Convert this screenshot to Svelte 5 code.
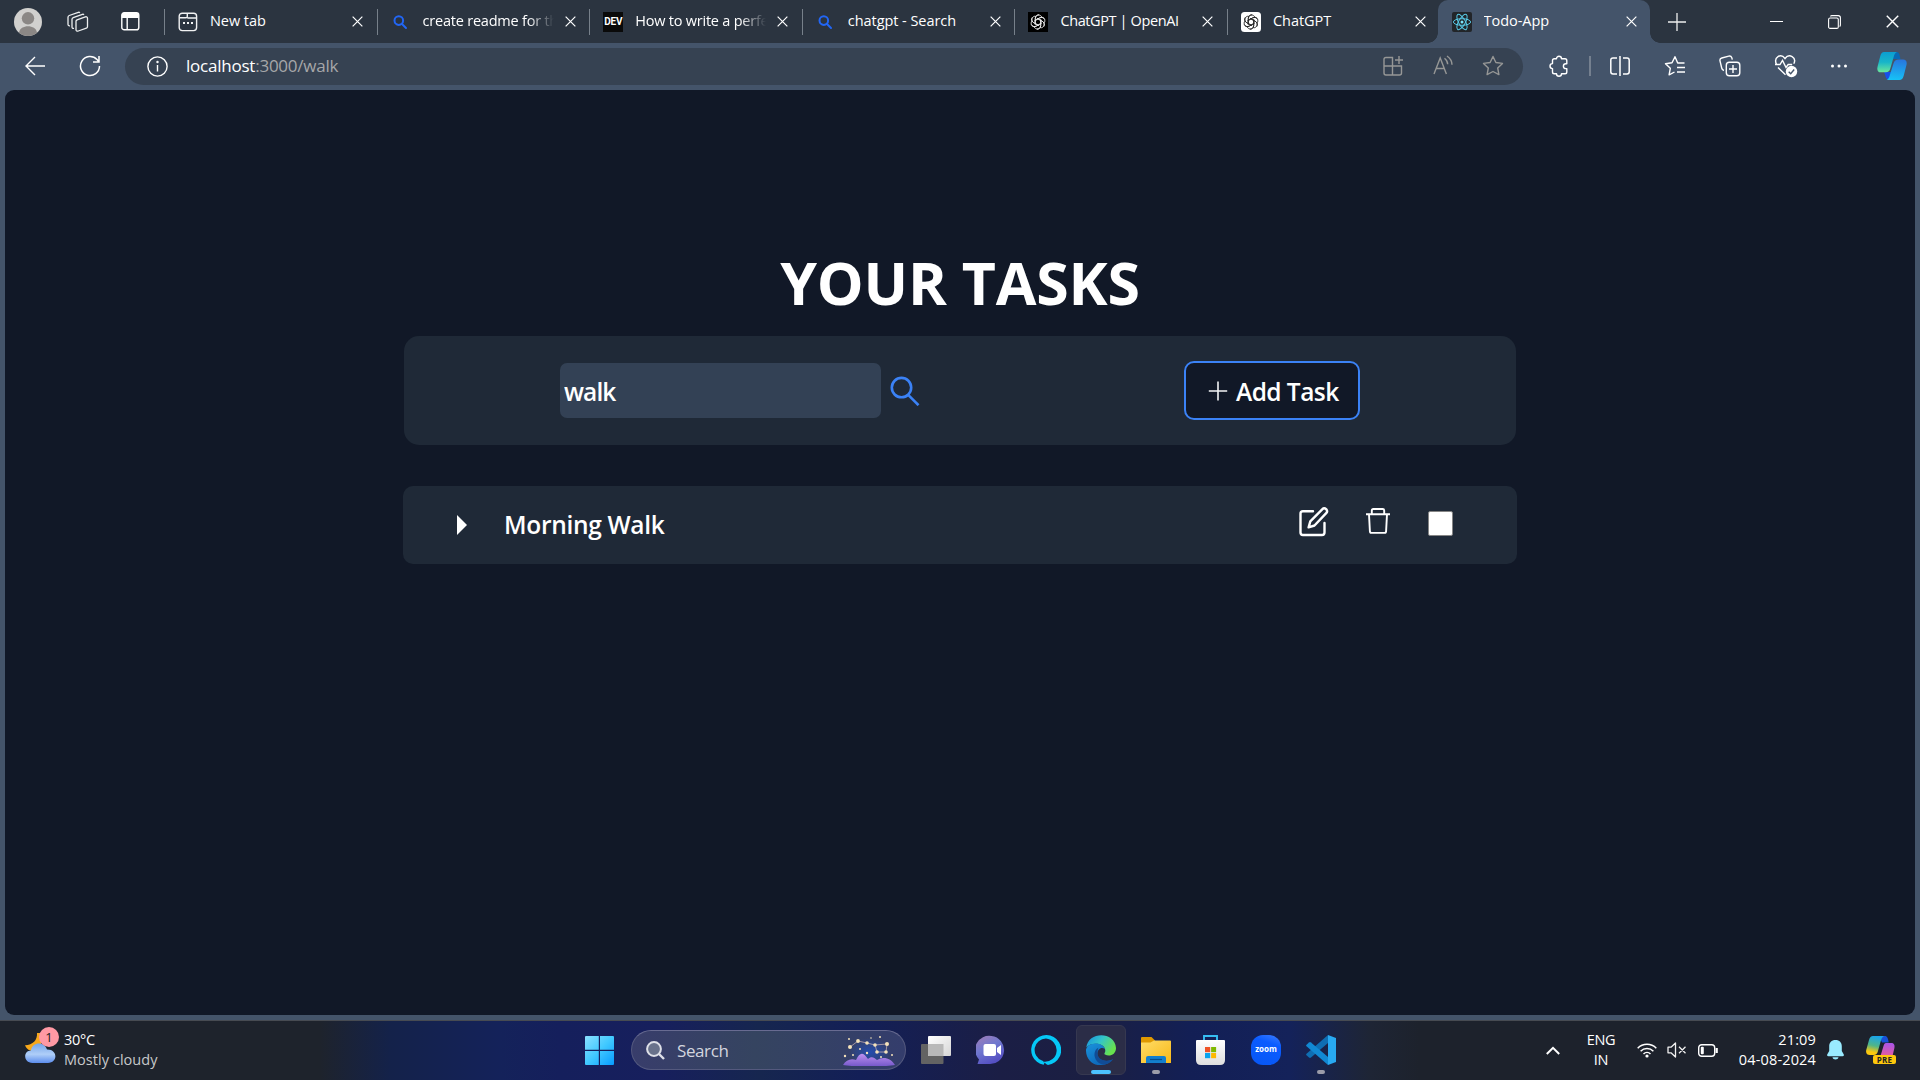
<script>
  const tabs = [
    { title: 'New tab', icon: 'page' },
    { title: 'create readme for this', icon: 'search', long: true },
    { title: 'How to write a perfect', icon: 'dev', long: true },
    { title: 'chatgpt - Search', icon: 'search' },
    { title: 'ChatGPT | OpenAI', icon: 'gptdark', tight: true },
    { title: 'ChatGPT', icon: 'gptlight' },
    { title: 'Todo-App', icon: 'react', active: true },
  ];
  const petals = [0, 60, 120, 180, 240, 300];
  let query = $state('walk');
  let done = $state(false);
</script>

{#snippet cross(size)}
  <svg width={size} height={size} viewBox="0 0 12 12" fill="none" stroke="currentColor" stroke-width="1.3"><path d="M.7.7l10.6 10.6M11.3.7L.7 11.3" /></svg>
{/snippet}

{#snippet favicon(kind)}
  {#if kind === 'page'}
    <svg width="20" height="20" viewBox="0 0 20 20" fill="none" stroke="#f1f2f3" stroke-width="1.4"><rect x="1.2" y="1.2" width="17.4" height="17.4" rx="3" /><path d="M1.5 5.8h6.2c1 0 1.6-.5 1.6-1.4V1.5M9 4.8c0 .8.5 1.2 1.3 1.2h8" /><path d="M5 11h2M9 11h2M13 11h2" stroke-width="2" /></svg>
  {:else if kind === 'search'}
    <svg width="20" height="20" viewBox="0 0 20 20" fill="none" stroke="#2266f5" stroke-width="2"><circle cx="7.800" cy="8.600" r="4.300" /><path d="M11 12l4 4" stroke-linecap="round" /></svg>
  {:else if kind === 'dev'}
    <span class="dev">DEV</span>
  {:else if kind === 'react'}
    <svg width="20" height="20" viewBox="0 0 20 20" fill="none" stroke="#58c9e6" stroke-width="1"><rect width="20" height="20" rx="2" fill="#222529" stroke="none" /><ellipse cx="10" cy="10" rx="8.6" ry="3.3" /><ellipse cx="10" cy="10" rx="8.6" ry="3.3" transform="rotate(60 10 10)" /><ellipse cx="10" cy="10" rx="8.6" ry="3.3" transform="rotate(120 10 10)" /><circle cx="10" cy="10" r="1.5" fill="#7ce4fa" stroke="none" /></svg>
  {:else}
    <svg width="20" height="20" viewBox="0 0 20 20" fill="none" stroke={kind === 'gptdark' ? '#eee' : '#222'} stroke-width=".85">
      <rect width="20" height="20" rx={kind === 'gptdark' ? 0 : 3.5} fill={kind === 'gptdark' ? '#000' : '#fff'} stroke="none" />
      {#each petals as angle}
        <path d="M7.3 13V6.5c0-4 5.4-4.6 6.5-1.3M7.3 8.4L11.9 5.8c2.2-1.2 4.1-.1 5 1.6" transform="rotate({angle} 10 10)" />
      {/each}
    </svg>
  {/if}
{/snippet}

<div class="desktop">
  <header class="tabbar">
    <svg class="avatar" width="28" height="28" viewBox="0 0 28 28"><circle cx="14" cy="14" r="14" fill="#d1d0ce" /><circle cx="14" cy="10.3" r="6.2" fill="#8b8785" /><path d="M5 24.7c1-8.5 17-8.5 18 0A14 14 0 0 1 5 24.7z" fill="#8b8785" /></svg>
    <svg class="workspaces" width="22" height="22" viewBox="0 0 22 22" fill="none" stroke="#eceeef" stroke-width="1.3" stroke-linejoin="round"><path d="M9 10.3c0-.8.4-1.2 1.1-1.5l8.2-2.9c1.3-.4 2.2.2 2.2 1.4v8.2c0 .8-.4 1.4-1.1 1.6l-8.1 2.9C10 20.400 9 19.900 9 18.700z" /><path d="M7 17.400c-1.300.2-2-.3-2-1.500V8.300c0-.8.400-1.400 1.200-1.700l9.200-3.300c.7-.2 1.200 0 1.500.6M3 14.800c-1.300.2-2-.4-2-1.500V6.200c0-.9.400-1.400 1.200-1.700l9.100-3.200c.7-.2 1.200 0 1.500.6" /></svg>
    <svg class="vertical" width="19" height="19" viewBox="0 0 19 19"><rect x=".8" y=".8" width="17" height="17" rx="2.400" fill="none" stroke="#fff" stroke-width="1.400" /><path d="M.8 6V3Q.8.8 3 .8h12.600q2.200 0 2.200 2.200v3z" fill="#fff" /><path d="M6.200 6v12" stroke="#fff" stroke-width="1.400" /></svg>

    <nav class="tabs">
      {#each tabs as tab}
        <div class="tab" class:active={tab.active}>
          {@render favicon(tab.icon)}
          <span class="title" class:long={tab.long} class:tight={tab.tight}>{tab.title}</span>
          {@render cross(11)}
        </div>
      {/each}
    </nav>

    <svg class="plus" width="18" height="18" viewBox="0 0 18 18" stroke="#eee" stroke-width="1.300"><path d="M9 0v18M0 9h18" /></svg>
    <div class="window-buttons">
      <svg width="13" height="13" viewBox="0 0 13 13" stroke="#fff"><path d="M0 6.500h13" /></svg>
      <svg width="13" height="14" viewBox="0 0 13 14" fill="none" stroke="#fff" stroke-width="1.100"><rect x=".6" y="3" width="9.700" height="10.400" rx="1.500" /><path d="M2.500 1.500Q2.700.6 4 .6h6.200q2.200 0 2.200 2.200v7.200q0 1-.8 1.500" /></svg>
      {@render cross(13)}
    </div>
  </header>

  <div class="toolbar">
    <svg class="back" width="20" height="20" viewBox="0 0 20 20" fill="none" stroke="#fff" stroke-width="1.400"><path d="M20 10H1M10 1L1 10l9 9" /></svg>
    <svg class="reload" width="22" height="22" viewBox="0 0 22 22" fill="none" stroke="#fff" stroke-width="1.500"><path d="M20.500 11a9.500 9.500 0 1 1-2.500-6.400l1.500 1.700M20 1v6h-6" /></svg>
    <div class="address">
      <svg class="info" width="21" height="21" viewBox="0 0 21 21" fill="none" stroke="#fff" stroke-width="1.400"><circle cx="10.500" cy="10.500" r="9.600" /><path d="M10.500 9v6.500" /><circle cx="10.500" cy="6" r=".5" fill="#fff" /></svg>
      <span class="url">localhost<em>:3000/walk</em></span>
      <div class="address-icons">
        <svg width="22" height="22" viewBox="0 0 22 22" fill="none" stroke="currentColor" stroke-width="1.400"><path d="M10.500 20V2.500H4Q2 2.500 2 4.500V18q0 2 2 2h13.500q2 0 2-2v-7H2M17 1v8M13 5h8" /></svg>
        <svg width="22" height="22" viewBox="0 0 22 22" fill="none" stroke="currentColor" stroke-width="1.400"><path d="M2 19L8.200 3l6.200 16M4.200 13.500h8M12.500 3.200c2.200 1.800 3.200 3.500 3.200 6M15 1c3.200 2.200 5 5 5 8.700" /></svg>
        <svg width="22" height="22" viewBox="0 0 22 22" fill="none" stroke="currentColor" stroke-width="1.400" stroke-linejoin="round"><path d="M11 1.500l2.900 6 6.600.9-4.800 4.600 1.200 6.600L11 16.500l-5.900 3.100 1.200-6.600L1.500 8.400l6.600-.9z" /></svg>
      </div>
    </div>
    <svg class="puzzle" width="22" height="22" viewBox="0 0 22 22" fill="none" stroke="#fff" stroke-width="1.400" stroke-linejoin="round"><path d="M8.500 3.700a2.500 2.500 0 0 1 5 0H17q1.800 0 1.800 1.800v3.300h-1a2.400 2.400 0 0 0 0 4.800h1V17q0 1.800-1.800 1.800h-3.500a2.500 2.500 0 0 1-5 0H6.300q-1.800 0-1.800-1.800v-3.400a2.500 2.500 0 0 1 0-5V5.500q0-1.800 1.800-1.800z" /></svg>
    <i class="rule"></i>
    <div class="tools">
      <svg width="22" height="22" viewBox="0 0 22 22" fill="none" stroke="#fff" stroke-width="1.500"><path d="M8 3H4Q1.800 3 1.800 5.200v11.600Q1.800 19 4 19h4M11 1v20M14 3h4q2.200 0 2.200 2.200v11.600q0 2.200-2.200 2.200h-4" /></svg>
      <svg width="22" height="22" viewBox="0 0 22 22" fill="none" stroke="#fff" stroke-width="1.400" stroke-linejoin="round"><path d="M20.500 8h-6.800L11 1.700l-3 6-6.500 1 4.800 4.600-1.200 6.600 5.400-2.900M13 12.500h8M13 17h8" /></svg>
      <svg width="22" height="22" viewBox="0 0 22 22" fill="none" stroke="#fff" stroke-width="1.400"><rect x="7.300" y="7.300" width="13.500" height="13.500" rx="3" /><path d="M14 10v8M10 14h8M5 15.500C3.500 15.200 3 14.500 2.700 13L1 5.800c-.3-1.500.3-2.400 1.800-2.800l7-1.900c1.500-.3 2.500.3 3 1.600l.5 2" /></svg>
      <svg width="24" height="24" viewBox="0 0 24 24" fill="none" stroke="#fff" stroke-width="1.400"><path d="M2.500 10.500C-.8 3 7-1 11 4.500c4-5.500 12-1.500 8.800 5.300M1 10.500h5l2.500-4 3.500 7 2.200-3h4M4 13.500l7.500 7.200" /><circle cx="17.500" cy="17.500" r="5.700" fill="#fff" stroke="none" /><path d="M14.700 17.800l2 1.900 3.500-4.200" stroke="#44546a" /></svg>
      <svg class="more" width="22" height="22" viewBox="0 0 22 22" fill="#fff"><circle cx="4.500" cy="11" r="1.500" /><circle cx="11" cy="11" r="1.500" /><circle cx="17.500" cy="11" r="1.500" /></svg>
    </div>
    <svg class="copilot" width="30" height="28" viewBox="0 0 30 28">
      <defs>
        <linearGradient id="cpa" x1="0" y1="0" x2="0" y2="1"><stop stop-color="#0b9ed2" /><stop offset=".5" stop-color="#18b5c9" /><stop offset="1" stop-color="#6ce79a" /></linearGradient>
        <linearGradient id="cpb" x1=".5" y1="0" x2=".4" y2="1"><stop stop-color="#2877df" /><stop offset="1" stop-color="#16c2f6" /></linearGradient>
      </defs>
      <path d="M16 0h3.500c2 0 2.700 1.500 3.300 4l.7 3H16z" fill="#0869b5" /><path d="M7 20h7l-1 7.500c-3 0-4-.8-4.700-4z" fill="#1750e8" />
      <path d="M7 0h13c-2 .7-2.800 2.600-3.500 5.500l-3.200 11c-.7 2.600-2 3.800-4.500 3.800H4C.8 20.300-.3 18 .6 14.500L3.300 4C4 1.300 5.200 0 7 0z" fill="url(#cpa)" />
      <path d="M21.500 7.500H26c3.200 0 4.300 2.300 3.400 5.800l-2.700 10.400c-.7 2.700-2 4.300-4.500 4.300H9.500c2-.8 2.800-2.600 3.500-5.500l3.500-11c.8-2.700 2.400-4 5-4z" fill="url(#cpb)" />
    </svg>
  </div>

  <main class="page">
    <h1>YOUR TASKS</h1>
    <section class="controls">
      <div class="search">
        <input bind:value={query} aria-label="Search tasks" />
        <svg width="30" height="30" viewBox="0 0 30 30" fill="none" stroke="#3b82f6" stroke-width="2.600"><circle cx="11.500" cy="11.600" r="9.700" /><path d="M18.200 18.800l10.300 10.400" /></svg>
      </div>
      <button class="add"><svg width="20" height="20" viewBox="0 0 20 20" stroke="#f3f4f6" stroke-width="1.600"><path d="M10 .5v19M.8 10h18.400" /></svg><span>Add Task</span></button>
    </section>
    <section class="task">
      <svg class="caret" width="10" height="20" viewBox="0 0 10 20" fill="#fff"><path d="M0 0l10 10L0 20z" /></svg>
      <span class="name">Morning Walk</span>
      <svg class="edit" width="30" height="30" viewBox="0 0 30 30" fill="none" stroke="#fff" stroke-width="2.400" stroke-linecap="round" stroke-linejoin="round"><path d="M14 4.200H4q-2.500 0-2.500 2.500v18.800Q1.500 28 4 28h19q2.500 0 2.500-2.500V16" /><path d="M23.200 2.300c2.600-2.600 6.500 1.100 4 3.900L15.500 18.500 9.600 20.300l1.700-6z" /></svg>
      <svg class="trash" width="24" height="26" viewBox="0 0 24 26" fill="none" stroke="#fff" stroke-width="1.900" stroke-linejoin="round"><path d="M0 6.300h24M3 6.300l.9 17q0 1.600 1.600 1.600h13q1.600 0 1.600-1.600l.9-17M5.800 6V2.500Q5.800 1 7.300 1h9.400q1.500 0 1.500 1.500V6" /></svg>
      <input class="check" type="checkbox" bind:checked={done} aria-label="Done" />
    </section>
  </main>

  <footer class="taskbar">
    <div class="weather">
      <div class="sky">
        <svg width="31" height="32" viewBox="0 0 31 32">
          <defs><linearGradient id="cloud" x1="0" y1="0" x2="0" y2="1"><stop stop-color="#75a5e9" /><stop offset=".55" stop-color="#afcef8" /><stop offset="1" stop-color="#5c8ded" /></linearGradient></defs>
          <path d="M12 0c.5 7-4 12-12 12.300 2 6 10 8 16 3.700V0z" fill="#f7a81b" />
          <path d="M7.500 30C-2 30-2 17.500 6 17.500 7 9 19 8 22 16.500c11-.5 11 13.500 1 13.500z" fill="url(#cloud)" />
        </svg>
        <span class="badge">1</span>
      </div>
      <div class="forecast"><span>30°C</span><span class="dim">Mostly cloudy</span></div>
    </div>

    <svg class="start" width="29" height="29" viewBox="0 0 29 29">
      <defs><linearGradient id="win" x1="0" y1="0" x2="1" y2="1"><stop stop-color="#8be0ff" /><stop offset=".5" stop-color="#41c9ff" /><stop offset="1" stop-color="#079bff" /></linearGradient></defs>
      <path d="M1 0h12.800v13.800H0V1q0-1 1-1zM15 0h13q1 0 1 1v12.800H15zM0 15h13.800v14H1q-1 0-1-1zM15 15h14v13q0 1-1 1H15z" fill="url(#win)" />
    </svg>
    <div class="taskbar-search">
      <svg width="19" height="19" viewBox="0 0 19 19" fill="none" stroke="#dee0e8" stroke-width="2"><circle cx="8" cy="8" r="6.900" fill="#69728b" /><path d="M13 13l5 5" stroke-width="2.400" /></svg>
      <span>Search</span>
      <svg class="stars" width="52" height="32" viewBox="0 0 52 32">
        <defs>
          <linearGradient id="hill" x1="0" y1="0" x2="0" y2="1"><stop stop-color="#bd91f0" /><stop offset="1" stop-color="#7457c9" /></linearGradient>
          <radialGradient id="glow"><stop stop-color="#2150bb" stop-opacity=".85" /><stop offset="1" stop-color="#2150bb" stop-opacity="0" /></radialGradient>
        </defs>
        <ellipse cx="27" cy="18" rx="21" ry="14" fill="url(#glow)" />
        <path d="M0 31c3-5 8-7 13-5 4-8 7-8 12-1 3-3 6-2 9 1 6-4 14-2 18 5-10 2-42 2-52 0z" fill="url(#hill)" />
        <path d="M7 13l8-6 9 2 8 2 12-1-1 8h-9l-2-7" fill="none" stroke="#d3b9b5" stroke-width=".7" />
        <g fill="#f5e3bb"><circle cx="7" cy="13" r="2" /><circle cx="15" cy="7" r="1.900" /><circle cx="24" cy="9" r="1.800" /><circle cx="32" cy="11" r="1.800" /><circle cx="44" cy="10" r="2" /><circle cx="43" cy="18" r="1.800" /><circle cx="34" cy="18" r="1.800" /><circle cx="6" cy="5" r="1" /><circle cx="28" cy="4" r=".8" /><circle cx="37" cy="3" r="1" /><circle cx="17" cy="15" r="1" /><circle cx="24" cy="19" r="1.200" /><circle cx="2" cy="22" r="1.200" /><circle cx="49" cy="21" r="1" /><circle cx="38" cy="23" r="1" /><circle cx="10" cy="21" r="1" /></g>
      </svg>
    </div>

    <div class="apps">
      <div class="app"><svg width="30" height="28" viewBox="0 0 30 28"><defs><linearGradient id="tv" x1="0" y1="0" x2="1" y2="1"><stop stop-color="#fff" /><stop offset="1" stop-color="#d6d6d6" /></linearGradient></defs><rect y="8" width="22.500" height="20" rx="1" fill="#636363" /><rect x="7" width="23" height="20" rx="1" fill="url(#tv)" /><path d="M7 8h15.500v12H8q-1 0-1-1z" fill="#b8b8b8" /></svg></div>
      <div class="app"><svg width="30" height="30" viewBox="0 0 30 30"><defs><linearGradient id="chat" x1="0" y1="0" x2=".5" y2="1"><stop stop-color="#a27cb5" /><stop offset=".5" stop-color="#7078cf" /><stop offset="1" stop-color="#5550c3" /></linearGradient></defs><path d="M15.500 1a14 14 0 1 1-3 28H1.500l1.500-4.500A14 14 0 0 1 15.500 1z" fill="url(#chat)" /><rect x="7.500" y="9" width="12.500" height="12" rx="2" fill="#fff" /><path d="M21 13l4-3v10l-4-3z" fill="#fff" /></svg></div>
      <div class="app"><svg width="30" height="30" viewBox="0 0 30 30"><path fill="#05c8f7" fill-rule="evenodd" d="M12.700 29.800A15 15 0 1 1 17 29.900C14.500 29 14 28 14 27.500a4 4 0 0 0-1.300 2.300zM15 3.600a11.300 11.300 0 0 0-4 21.900c1.500.5 2 1.500 2 2.500v-1.200A11.400 11.400 0 1 0 15 3.600z" /></svg></div>
      <div class="app current"><svg width="30" height="30" viewBox="0 0 30 30">
        <defs>
          <linearGradient id="eg" x1="0" y1="0" x2="1" y2=".5"><stop stop-color="#158de0" /><stop offset=".5" stop-color="#33c5c9" /><stop offset="1" stop-color="#68e24e" /></linearGradient>
          <linearGradient id="eb" x1="0" y1="0" x2=".7" y2="1"><stop stop-color="#1a93dc" /><stop offset="1" stop-color="#0c63b5" /></linearGradient>
        </defs>
        <path d="M.3 12.500C2-4 29-4 30 13c0 7-7 9-11 6.500-1.500-1 .3-1.500.3-4C19.200 9 7 6 .3 12.500z" fill="url(#eg)" />
        <path d="M0 14.500C2 6.500 17 6.500 19 14c-4-3-8.500 1-7.500 6 1 5 8 8 15.500 4.200C18 35-.5 31 0 14.500z" fill="url(#eb)" />
        <path d="M12.300 12.800C6 16 7.500 28 17.500 29.700c4-.7 7.500-2.800 9.500-5.500-8 3.800-15-.2-15.500-5.200-.2-2.500.3-4.500.8-6.200z" fill="#114c95" />
      </svg><i></i></div>
      <div class="app"><svg width="30" height="27" viewBox="0 0 30 27"><defs><linearGradient id="fold" x1="0" y1="0" x2="1" y2="1"><stop stop-color="#ffdc68" /><stop offset="1" stop-color="#f9b917" /></linearGradient></defs><path d="M1 0h9.500L14 3.500V9H0V1q0-1 1-1z" fill="#df9800" /><path d="M0 5.500h9.500L13 3.600h16q1 0 1 1V26H0z" fill="url(#fold)" /><path d="M5 26v-5q0-2 2-2h16q2 0 2 2v5z" fill="#137fce" /><path d="M9 22.500h12" stroke="#074e8c" stroke-width="1.200" /></svg><i></i></div>
      <div class="app store"><svg width="29" height="30" viewBox="0 0 29 30"><path d="M8 6V1h13v5" fill="none" stroke="#36bdf2" stroke-width="1.900" /><defs><linearGradient id="bag" x1="0" y1="0" x2="0" y2="1"><stop stop-color="#fff" /><stop offset="1" stop-color="#dedede" /></linearGradient></defs><path d="M1 5h27q1 0 1 1v19q0 5-5 5H5q-5 0-5-5V6q0-1 1-1z" fill="url(#bag)" /><path d="M9 12h5.200v5.200H9z" fill="#ef5326" /><path d="M15.100 12h5v5.200h-5z" fill="#7fb900" /><path d="M9 18h5.200v5.200H9z" fill="#0aa4ee" /><path d="M15.100 18h5v5.200h-5z" fill="#feb902" /></svg></div>
      <div class="app"><span class="zoom">zoom</span></div>
      <div class="app"><svg width="30" height="30" viewBox="0 0 30 30"><path d="M22 0l8 3v24l-8 3z" fill="#28a9f2" /><path d="M22 0v8L5 22.500q-1 .8-2 0L.5 20.300q-.8-.8 0-1.600z" fill="#0f6eb3" /><path d="M22 30v-8L5 7.500q-1-.8-2 0L.5 9.700q-.8.8 0 1.600z" fill="#1188d3" /></svg><i></i></div>
    </div>

    <div class="tray">
      <svg class="chev" width="14" height="9" viewBox="0 0 14 9" fill="none" stroke="#fff" stroke-width="2"><path d="M.8 8L7 1.800 13.200 8" /></svg>
      <div class="lang"><span>ENG</span><span>IN</span></div>
      <svg class="wifi" width="20" height="16" viewBox="0 0 20 16" fill="none" stroke="#fff" stroke-width="1.500"><path d="M.7 6.200a13 13 0 0 1 18.600 0M3.600 9.200a9 9 0 0 1 12.800 0M6.500 12a5 5 0 0 1 7 0" /><circle cx="10" cy="14" r="1.600" fill="#fff" stroke="none" /></svg>
      <svg class="sound" width="20" height="16" viewBox="0 0 20 16" fill="none" stroke="#f0f0f0" stroke-width="1.300" stroke-linejoin="round"><path d="M1 5.200h3L8.500 1v14L4 10.800H1zM12 4.800l6.500 6.500M18.500 4.800L12 11.300" /></svg>
      <svg class="battery" width="20" height="13" viewBox="0 0 20 13" fill="none" stroke="#fff" stroke-width="1.400"><rect x=".7" y=".7" width="16" height="11.600" rx="3" /><path d="M18.700 4v5" stroke-width="2.200" /><rect x="2.800" y="2.700" width="3" height="7.600" rx="1" fill="#fff" stroke="none" /></svg>
      <div class="clock"><span>21:09</span><span>04-08-2024</span></div>
      <svg class="bell" width="17" height="20" viewBox="0 0 17 20" fill="#99ebff"><path d="M8.500 0c4 0 6.300 2.600 6.300 6.500V11l2 3.600q.4 1.600-1.300 1.600H1.500q-1.700 0-1.300-1.600L2.200 11V6.500C2.200 2.600 4.500 0 8.500 0zM5.500 17.200h6c-.4 3-5.600 3-6 0z" /></svg>
      <div class="pre">
        <svg width="29" height="28" viewBox="0 0 29 28">
          <defs>
            <linearGradient id="pa" x1=".5" y1="0" x2=".3" y2="1"><stop stop-color="#19a5eb" /><stop offset=".5" stop-color="#50b588" /><stop offset=".85" stop-color="#fac80e" /></linearGradient>
            <linearGradient id="pb" x1=".5" y1="0" x2=".4" y2="1"><stop stop-color="#aa55e8" /><stop offset="1" stop-color="#f75e86" /></linearGradient>
          </defs>
          <path d="M13 0h6c2 0 3 2 3.700 6.500H16z" fill="#1750d7" />
          <path d="M7 0h11c-2 1-2.700 3-3.500 6l-2.800 10c-.7 2-2 3-4 3H4c-3 0-4.500-2-3.700-5.200L3 4C3.700 1.300 5 0 7 0z" fill="url(#pa)" />
          <path d="M20 7h5c3 0 4 2 3.400 5l-2.800 12H12c1.500-1 2-2 2.500-4l3-10c.6-2 1.200-3 2.500-3z" fill="url(#pb)" />
        </svg>
        <span>PRE</span>
      </div>
    </div>
  </footer>
</div>

<style>
  :global(body) { margin: 0; overflow: hidden; background: #44546a; }
  * { box-sizing: border-box; }
  svg { display: block; flex: none; }
  .desktop {
    width: 1920px; height: 1080px; display: flex; flex-direction: column;
    background: #44546a; color: #fff; font-family: "Open Sans", "Noto Sans", sans-serif;
  }

  .tabbar { height: 43px; display: flex; align-items: center; background: #2b3440; padding-left: 14px; }
  .workspaces { margin-left: 25px; margin-top: 1px; }
  .vertical { margin-left: 32px; }
  .tabs { display: flex; margin-left: 24px; height: 43px; }
  .tab { width: 212.6px; height: 43px; display: flex; align-items: center; padding: 0 12px 0 14px; position: relative; }
  .tab::before { content: ''; position: absolute; left: 0; top: 9px; width: 1px; height: 26px; background: #77808a; }
  .tab.active { background: #44546a; border-radius: 10px 10px 0 0; margin-left: -2px; }
  .tab.active::before {
    left: -10px; top: auto; bottom: 0; width: 10px; height: 10px;
    background: radial-gradient(circle at 0 0, transparent 9.500px, #44546a 10px);
  }
  .tab.active::after {
    content: ''; position: absolute; right: -10px; bottom: 0; width: 10px; height: 10px;
    background: radial-gradient(circle at 100% 0, transparent 9.500px, #44546a 10px);
  }
  .title {
    flex: none; width: 131px; margin-left: 12px; margin-right: 11px; overflow: hidden; white-space: nowrap;
    font-size: 14.500px; line-height: 22px; letter-spacing: -.05px; margin-top: -2px;
  }
  .title.long { letter-spacing: -.22px; mask-image: linear-gradient(90deg, #000 105px, transparent 131px); }
  .title.tight { letter-spacing: -.38px; }
  .dev {
    width: 20px; height: 20px; background: #0a0a0a; font: 700 10px/20px Roboto, sans-serif;
    letter-spacing: -.2px; text-align: center; flex: none;
  }
  .plus { margin-left: 18px; }
  .window-buttons { display: flex; align-items: center; gap: 45px; margin-left: 84px; }

  .toolbar { height: 47px; display: flex; align-items: center; padding: 0 0 1px 25px; }
  .reload { margin-left: 34px; }
  .address {
    width: 1398px; height: 37px; margin-left: 24px; border-radius: 19px; background: #364252;
    display: flex; align-items: center; padding: 0 19px 0 22px;
  }
  .url { margin-left: 18px; font-size: 17px; line-height: 24px; letter-spacing: -.23px; }
  .url em { font-style: normal; color: #a6a7a9; }
  .address-icons { margin-left: auto; display: flex; gap: 28px; color: #969796; }
  .puzzle { margin-left: 25px; }
  .rule { width: 2px; height: 20px; background: #75808f; margin-left: 19px; }
  .tools { display: flex; gap: 33px; margin-left: 18px; align-items: center; }
  .more { margin-left: -3px; }
  .copilot { margin-left: 27px; }

  .page {
    height: 925px; margin: 0 5px; border-radius: 9px; background: #111827;
    display: flex; flex-direction: column; align-items: center;
  }
  h1 { margin: 155px 0 0; height: 75px; line-height: 75px; font-size: 59px; font-weight: 700; white-space: nowrap; letter-spacing: -.2px; }
  .controls {
    width: 1112px; height: 109px; margin-top: 16px; border-radius: 15px; background: #1f2937;
    display: flex; align-items: center; justify-content: space-between; padding: 0 156px;
  }
  .search { display: flex; align-items: center; gap: 9px; }
  .search input {
    width: 321px; height: 55px; border: 0; border-radius: 7px; background: #334155; outline: none;
    color: #fff; font: 600 24.500px "Open Sans", sans-serif; letter-spacing: -.9px; padding: 2px 4px 0;
  }
  .add {
    width: 176px; height: 59px; border: 2px solid #3b82f6; border-radius: 10px; background: #111827; color: #fff;
    display: flex; align-items: center; padding: 0 0 0 22px; gap: 8px;
    font: 600 24.500px "Open Sans", sans-serif; letter-spacing: -.55px; white-space: nowrap;
  }
  .add span { padding-top: 2px; }
  .task {
    width: 1114px; height: 78px; margin-top: 41px; border-radius: 10px; background: #1f2937;
    display: flex; align-items: center; padding: 0 64px 0 54px;
  }
  .name { margin: -2px 0 0 37px; font-size: 24.500px; font-weight: 600; letter-spacing: -.32px; flex: 1; }
  .edit { margin-top: -7px; }
  .trash { margin: -8px 38px 0 37px; }
  .check { appearance: none; width: 25px; height: 25px; margin: -4px 0 0; border: 1px solid #858585; border-radius: 2px; background: #fff; }

  .taskbar {
    height: 60px; margin-top: 5px; display: flex; align-items: center; padding: 0 0 1px 25px;
    border-top: 1px solid #474b52; font-size: 14.500px;
    background: linear-gradient(90deg, #1e232c 0, #1e232c 320px, #14224a 390px, #14225a 500px, #151f5c 560px, #171f5d 660px, #16264f 760px, #131f57 860px, #1b1e45 1000px, #1b1f42 1090px, #131f55 1190px, #14225a 1290px, #1e2535 1370px, #1d222c 1420px);
  }
  .weather { display: flex; align-items: center; width: 560px; }
  .sky { position: relative; margin-top: -2px; }
  .badge {
    position: absolute; left: 14px; top: -6px; width: 20px; height: 20px; border-radius: 50%;
    background: #ff99a4; color: #222; text-align: center; font-size: 13px; line-height: 20px;
  }
  .forecast { display: flex; flex-direction: column; line-height: 20px; margin-left: 8px; letter-spacing: -.3px; margin-top: -1px; }
  .dim { color: #c7c8ca; letter-spacing: .05px; }
  .taskbar-search {
    width: 275px; height: 40px; margin-left: 17px; border-radius: 20px; padding: 0 10px 0 14px;
    border: 1px solid #54597e; border-top-color: #686b91; background: linear-gradient(90deg, #383d6b, #354460 45%, #343d6c);
    display: flex; align-items: center; font-size: 17px; color: #d3d5df; letter-spacing: -.4px;
  }
  .taskbar-search span { margin-left: 12px; }
  .stars { margin-left: auto; }
  .apps { display: flex; gap: 5px; margin-left: 5px; }
  .app { width: 50px; height: 50px; display: flex; align-items: center; justify-content: center; position: relative; border-radius: 6px; }
  .app.store { padding-right: 2px; }
  .app.current { background: #2b2d47; border: 1px solid #363850; }
  .app i { position: absolute; left: 21px; bottom: 1px; width: 8px; height: 4px; border-radius: 2px; background: #9b9ca9; }
  .app.current i { left: 14px; bottom: 0; width: 20px; background: #4cc2ff; }
  .zoom {
    width: 30px; height: 30px; border-radius: 12px; background: linear-gradient(200deg, #3d7dff, #0b5cff 30%, #0757f5);
    font: 700 8px/28px "Open Sans", sans-serif; text-align: center;
  }
  .tray { display: flex; align-items: center; margin-left: 200px; line-height: 20px; letter-spacing: -.3px; }
  .lang { width: 32px; margin-left: 25px; display: flex; flex-direction: column; align-items: center; }
  .wifi { margin-left: 20px; }
  .sound { margin-left: 10px; }
  .battery { margin-left: 11px; }
  .clock { width: 90px; margin-left: 8px; display: flex; flex-direction: column; align-items: flex-end; margin-top: -1px; }
  .clock span { letter-spacing: .15px; }
  .bell { margin-left: 11px; }
  .pre { position: relative; margin-left: 22px; }
  .pre span {
    position: absolute; left: 7px; bottom: 0; width: 23px; height: 9px; border-radius: 2px; background: #fdc70c;
    color: #222; font: 700 8px/9px "Open Sans", sans-serif; letter-spacing: .2px; text-align: center;
  }
</style>
